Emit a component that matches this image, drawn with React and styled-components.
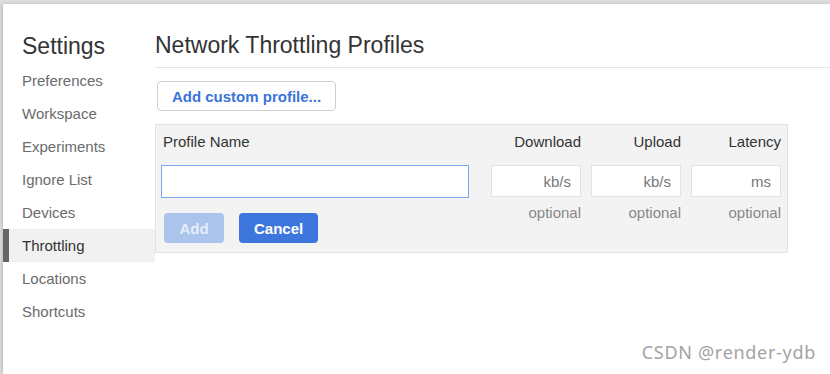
import React from 'react';
import styled, { createGlobalStyle } from 'styled-components';

const GlobalStyle = createGlobalStyle`
  html, body { margin: 0; padding: 0; }
  body {
    background: #dcdcdc;
    font-family: "Liberation Sans", Arial, sans-serif;
    color: #333;
  }
`;

const items = ['Preferences', 'Workspace', 'Experiments', 'Ignore List', 'Devices', 'Throttling', 'Locations', 'Shortcuts'];
const columns = [
  { label: 'Download', unit: 'kb/s' },
  { label: 'Upload', unit: 'kb/s' },
  { label: 'Latency', unit: 'ms' },
];

function App() {
  return (
    <>
      <GlobalStyle />
      <Frame>
        <Window>
          <Sidebar>
            <SideTitle>Settings</SideTitle>
            {items.map((name) => (
              <NavItem key={name} selected={name === 'Throttling'}>{name}</NavItem>
            ))}
          </Sidebar>
          <Main>
            <Heading>Network Throttling Profiles</Heading>
            <Body>
              <OutlineButton>Add custom profile...</OutlineButton>
              <Editor>
                <NameColumn>
                  <Label>Profile Name</Label>
                  <NameInput />
                  <Actions>
                    <Button disabled>Add</Button>
                    <Button>Cancel</Button>
                  </Actions>
                </NameColumn>
                {columns.map((c) => (
                  <ValueColumn key={c.label}>
                    <Label>{c.label}</Label>
                    <ValueInput placeholder={c.unit} />
                    <Hint>optional</Hint>
                  </ValueColumn>
                ))}
              </Editor>
            </Body>
          </Main>
        </Window>
        <Watermark>CSDN @render-ydb</Watermark>
      </Frame>
    </>
  );
}
export default App;

const Frame = styled.div`
  position: relative;
  height: 374px;
  padding: 4px 0 0 3px;
  box-sizing: border-box;
  overflow: hidden;
`;

const Window = styled.div`
  display: flex;
  height: 100%;
  background: #fff;
  box-shadow: -1px 0 3px rgba(0, 0, 0, 0.15);
`;

const Sidebar = styled.div`
  width: 152px;
  flex-shrink: 0;
  padding-top: 26px;
`;

const SideTitle = styled.div`
  font-size: 23px;
  line-height: 32px;
  padding-left: 19px;
  margin-bottom: 2px;
  color: #333;
`;

const NavItem = styled.div`
  height: 33px;
  line-height: 33px;
  font-size: 15px;
  padding-left: 13px;
  border-left: 6px solid ${(p) => (p.selected ? '#666' : 'transparent')};
  background: ${(p) => (p.selected ? '#f1f1f1' : 'transparent')};
  color: ${(p) => (p.selected ? '#333' : '#6b6b6b')};
`;

const Main = styled.div`
  flex: 1;
  display: flex;
  flex-direction: column;
`;

const Heading = styled.div`
  font-size: 23px;
  line-height: 32px;
  padding: 25px 0 6px;
  border-bottom: 1px solid #e6e6e6;
  color: #333;
`;

const Body = styled.div`
  padding-top: 13px;
`;

const OutlineButton = styled.button`
  margin-left: 2px;
  height: 30px;
  width: 179px;
  border: 1px solid #cfcfcf;
  border-radius: 4px;
  background: #fff;
  color: #3a74d9;
  font-family: inherit;
  font-size: 15px;
  font-weight: bold;
`;

const Editor = styled.div`
  display: flex;
  gap: 10px;
  width: 633px;
  box-sizing: border-box;
  margin-top: 13px;
  padding: 0 6px 9px 5px;
  background: #f3f3f3;
  border: 1px solid #e2e2e2;
`;

const NameColumn = styled.div`
  width: 308px;
  margin-right: 12px;
`;

const ValueColumn = styled.div`
  width: 90px;
  text-align: right;
`;

const Label = styled.div`
  font-size: 15px;
  line-height: 34px;
  padding-left: 2px;
  color: #333;
`;

const NameInput = styled.input`
  display: block;
  width: 308px;
  height: 33px;
  box-sizing: border-box;
  margin-top: 6px;
  border: 1px solid #7fa6ea;
  background: #fff;
  outline: none;
`;

const ValueInput = styled.input`
  display: block;
  width: 90px;
  height: 32px;
  box-sizing: border-box;
  margin-top: 6px;
  padding: 0 9px;
  border: 1px solid #e2e2e2;
  background: #fff;
  text-align: right;
  font-family: inherit;
  font-size: 15px;
  outline: none;
  &::placeholder { color: #777; }
`;

const Hint = styled.div`
  font-size: 15px;
  line-height: 32px;
  color: #888;
`;

const Actions = styled.div`
  display: flex;
  gap: 15px;
  margin-top: 15px;
  padding-left: 3px;
`;

const Button = styled.button`
  height: 30px;
  padding: 0 15px;
  border: none;
  border-radius: 4px;
  font-family: inherit;
  font-size: 15px;
  font-weight: bold;
  background: ${(p) => (p.disabled ? '#abc4ec' : '#3d76dc')};
  color: ${(p) => (p.disabled ? '#e6eefb' : '#fff')};
  &:first-child { width: 60px; }
  &:last-child { width: 79px; }
`;

const Watermark = styled.div`
  position: absolute;
  right: 14px;
  bottom: 10px;
  font-family: "Noto Sans", "Open Sans", sans-serif;
  font-size: 18px;
  letter-spacing: 0.7px;
  color: #a3a3a3;
`;
